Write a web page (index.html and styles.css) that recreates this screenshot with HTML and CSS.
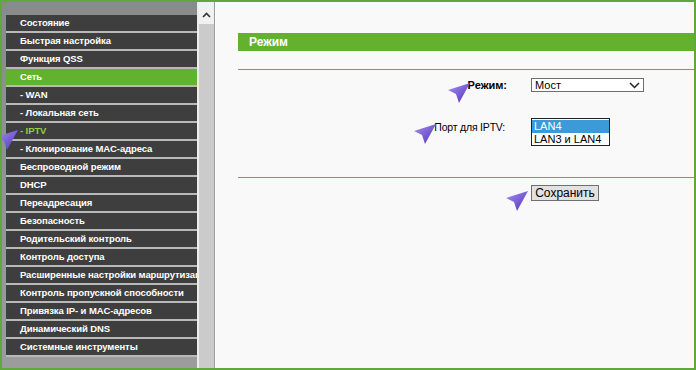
FILE: index.html
```html
<!DOCTYPE html>
<html lang="ru">
<head>
    <meta charset="UTF-8">
    <title>Режим</title>
    <link rel="stylesheet" href="styles.css">
</head>
<body>
    <div class="frame">
        <nav class="sidebar">
            <ul class="menu">
                <li>Состояние</li>
                <li>Быстрая настройка</li>
                <li>Функция QSS</li>
                <li class="active">Сеть</li>
                <li>- WAN</li>
                <li>- Локальная сеть</li>
                <li class="current">- IPTV</li>
                <li>- Клонирование MAC-адреса</li>
                <li>Беспроводной режим</li>
                <li>DHCP</li>
                <li>Переадресация</li>
                <li>Безопасность</li>
                <li>Родительский контроль</li>
                <li>Контроль доступа</li>
                <li>Расширенные настройки маршрутизации</li>
                <li>Контроль пропускной способности</li>
                <li>Привязка IP- и MAC-адресов</li>
                <li>Динамический DNS</li>
                <li>Системные инструменты</li>
            </ul>
        </nav>

        <div class="scrollbar">
            <div class="scroll-up">
                <svg width="9" height="6" viewBox="0 0 9 6"><path d="M1 5 L4.5 1.5 L8 5" fill="none" stroke="#333" stroke-width="1.6"/></svg>
            </div>
            <div class="track"></div>
        </div>

        <main class="content">
            <h2 class="title">Режим</h2>
            <div class="rule"></div>
            <div class="form">
                <span class="label strong">Режим:</span>
                <div class="select">
                    <span>Мост</span>
                    <svg width="11" height="7" viewBox="0 0 11 7"><path d="M1 1 L5.5 5.5 L10 1" fill="none" stroke="#222" stroke-width="1.5"/></svg>
                </div>
                <span class="label top">Порт для IPTV:</span>
                <div class="listbox">
                    <div class="option selected">LAN4</div>
                    <div class="option">LAN3 и LAN4</div>
                </div>
            </div>
            <div class="rule low"></div>
            <div class="actions">
                <button class="btn">Сохранить</button>
            </div>
        </main>

        <!-- purple pointer marks drawn over the screenshot -->
        <svg class="pointer p1" viewBox="0 0 24 22"><use href="#arrow"/></svg>
        <svg class="pointer p2" viewBox="0 0 24 22"><use href="#arrow"/></svg>
        <svg class="pointer p3" viewBox="0 0 24 22"><use href="#arrow"/></svg>
        <svg class="pointer p4" viewBox="0 0 24 22"><use href="#arrow"/></svg>

        <svg width="0" height="0" class="defs">
            <defs>
                <linearGradient id="purple" x1="0" y1="0" x2="1" y2="1">
                    <stop offset="0" stop-color="#a890f2"/>
                    <stop offset="1" stop-color="#4f33b8"/>
                </linearGradient>
                <polygon id="arrow" points="23,1 1,8 9,12 12,21" fill="url(#purple)"/>
            </defs>
        </svg>
    </div>
</body>
</html>
```

FILE: styles.css
```css
body {
    margin: 0;
    font-family: "Liberation Sans", Arial, sans-serif;
    background: #fff;
}
.frame {
    position: relative;
    width: 696px;
    height: 370px;
    box-sizing: border-box;
    border: 2px solid #5fa83a;
    display: flex;
    overflow: hidden;
}
.sidebar {
    width: 195px;
    flex: none;
    padding: 13px 0 0 4px;
    box-sizing: border-box;
    background: linear-gradient(#8a8a8a, #9c9c9c);
}
.menu {
    list-style: none;
    margin: 0;
    padding: 0;
}
.menu li {
    height: 16px;
    line-height: 16px;
    border-bottom: 2px solid #b9b9b9;
    background: #3e3e3e;
    color: #fff;
    font-size: 9.5px;
    letter-spacing: -0.1px;
    font-weight: bold;
    padding-left: 14px;
    white-space: nowrap;
    overflow: hidden;
}
.menu li.active {
    background: #62b22f;
}
.menu li.current {
    color: #93cf3f;
}
.scrollbar {
    width: 18px;
    flex: none;
    display: flex;
    flex-direction: column;
    border-left: 2px solid #ececec;
    border-right: 1px solid #9a9a9a;
    box-sizing: border-box;
    margin-right: 1px;
}
.scroll-up {
    height: 22px;
    background: #f1f1f1;
    display: flex;
    justify-content: center;
    padding-top: 10px;
    box-sizing: border-box;
}
.track {
    flex: 1;
    background: #cbcbcb;
}
.content {
    flex: 1;
    background: #f9f9f9;
    padding: 31px 0 0 22px;
}
.title {
    margin: 0;
    height: 18px;
    line-height: 18px;
    background: #63b12f;
    color: #fff;
    font-size: 12px;
    font-weight: bold;
    padding-left: 11px;
}
.rule {
    margin-top: 18px;
    border-top: 1px solid #6f9b80;
}
.rule.low {
    margin-top: 31px;
}
.form {
    display: grid;
    grid-template-columns: 269px auto;
    column-gap: 24px;
    row-gap: 26px;
    padding-top: 8px;
    font-size: 11px;
    color: #000;
}
.label {
    text-align: right;
    align-self: center;
}
.label.strong {
    font-weight: bold;
}
.label.top {
    align-self: start;
    padding-top: 3px;
    padding-right: 2px;
    font-size: 10.5px;
    letter-spacing: -0.2px;
}
.select {
    width: 113px;
    height: 14px;
    box-sizing: border-box;
    border: 1px solid #6e6e6e;
    background: #fff;
    display: flex;
    align-items: center;
    justify-content: space-between;
    padding: 0 3px 0 3px;
    font-size: 11px;
}
.listbox {
    width: 79px;
    height: 28px;
    box-sizing: border-box;
    border: 1px solid #222;
    background: #fff;
    font-size: 11px;
    padding: 1px 0;
}
.option {
    height: 13px;
    line-height: 13px;
    padding-left: 2px;
}
.option.selected {
    background: #3c9ad8;
    color: #fff;
}
.actions {
    padding: 5px 0 0 293px;
}
.btn {
    height: 16px;
    width: 68px;
    padding: 0;
    font-family: "Liberation Sans", Arial, sans-serif;
    font-size: 12px;
    color: #000;
    background: #e2e2e2;
    border: 1px solid #6f6f6f;
    border-radius: 0;
}
.pointer {
    position: absolute;
    width: 24px;
    height: 22px;
}
.p1 { left: 445px; top: 80px; }
.p2 { left: 411px; top: 121px; }
.p3 { left: -7px; top: 127px; }
.p4 { left: 503px; top: 188px; }
.defs {
    position: absolute;
}
```
